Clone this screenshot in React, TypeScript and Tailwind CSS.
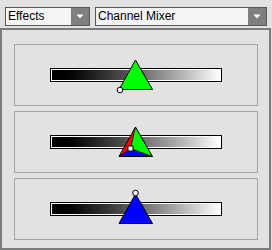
import React from "react";

const APEX = { x: 120.5, y: 15 };
const BL = { x: 104, y: 44.5 };
const BR = { x: 137.5, y: 44.5 };
const tri = `${APEX.x},${APEX.y} ${BR.x},${BR.y} ${BL.x},${BL.y}`;

function Dropdown({ label, width }: { label: string; width: string }) {
  return (
    <div className={`${width} h-[19px] flex border border-[#585858] bg-[#f5f5f5]`}>
      <span className="flex-1 pl-[2px] text-[12px] leading-[17px] text-black">{label}</span>
      <div className="w-[18px] bg-[#7f7f7f] flex items-center justify-center">
        <svg width="8" height="5" viewBox="0 0 8 5">
          <polygon points="0.5,0.5 7.5,0.5 4,4.5" fill="#ffffff" />
        </svg>
      </div>
    </div>
  );
}

function Panel({ children }: { children: React.ReactNode }) {
  return (
    <div className="relative w-[244px] h-[62px] border border-[#a4a4a4] flex items-center justify-center">
      <div className="w-[172px] h-[14px] border border-black">
        <div className="w-full h-full border border-white bg-linear-to-r from-black to-white" />
      </div>
      <svg className="absolute inset-0" width="242" height="60" viewBox="0 0 242 60">
        {children}
      </svg>
    </div>
  );
}

export default function App() {
  const cx = 115.5;
  const cy = 36.5;
  return (
    <div className="w-[272px] h-[250px] bg-[#e2e2e2] flex flex-col font-['Liberation_Sans',Arial,sans-serif]">
      <div className="h-[28px] flex items-start pt-[7px] pl-[5px] gap-[5px]">
        <Dropdown label="Effects" width="w-[85px]" />
        <Dropdown label="Channel Mixer" width="w-[172px]" />
      </div>
      <div className="w-[271px] h-[222px] border-2 border-[#7c7c7c] flex flex-col gap-[5px] pt-[14px] pl-[12px]">
        <Panel>
          <polygon points={tri} fill="#00ff00" stroke="#000" strokeWidth="1" strokeLinejoin="round" />
          <circle cx={105} cy={45} r={2.8} fill="#fff" stroke="#000" strokeWidth="1" />
        </Panel>
        <Panel>
          <polygon points={`${APEX.x},${APEX.y} ${cx},${cy} ${BL.x},${BL.y}`} fill="#ff0000" />
          <polygon points={`${APEX.x},${APEX.y} ${BR.x},${BR.y} ${cx},${cy}`} fill="#00ff00" />
          <polygon points={`${BL.x},${BL.y} ${cx},${cy} ${BR.x},${BR.y}`} fill="#0000ff" />
          <polyline points={`${APEX.x},${APEX.y} ${cx},${cy}`} stroke="#000" strokeWidth="0.8" fill="none" />
          <polyline points={`${BL.x},${BL.y} ${cx},${cy} ${BR.x},${BR.y}`} stroke="#000" strokeWidth="0.8" fill="none" />
          <polygon points={tri} fill="none" stroke="#000" strokeWidth="1" strokeLinejoin="round" />
          <rect x={cx - 2.5} y={cy - 2.5} width={5} height={5} fill="#fff" stroke="#000" strokeWidth="1" />
        </Panel>
        <Panel>
          <polygon points={tri} fill="#0000ff" stroke="#000" strokeWidth="1" strokeLinejoin="round" />
          <circle cx={APEX.x} cy={14} r={2.8} fill="#fff" stroke="#000" strokeWidth="1" />
        </Panel>
      </div>
    </div>
  );
}
